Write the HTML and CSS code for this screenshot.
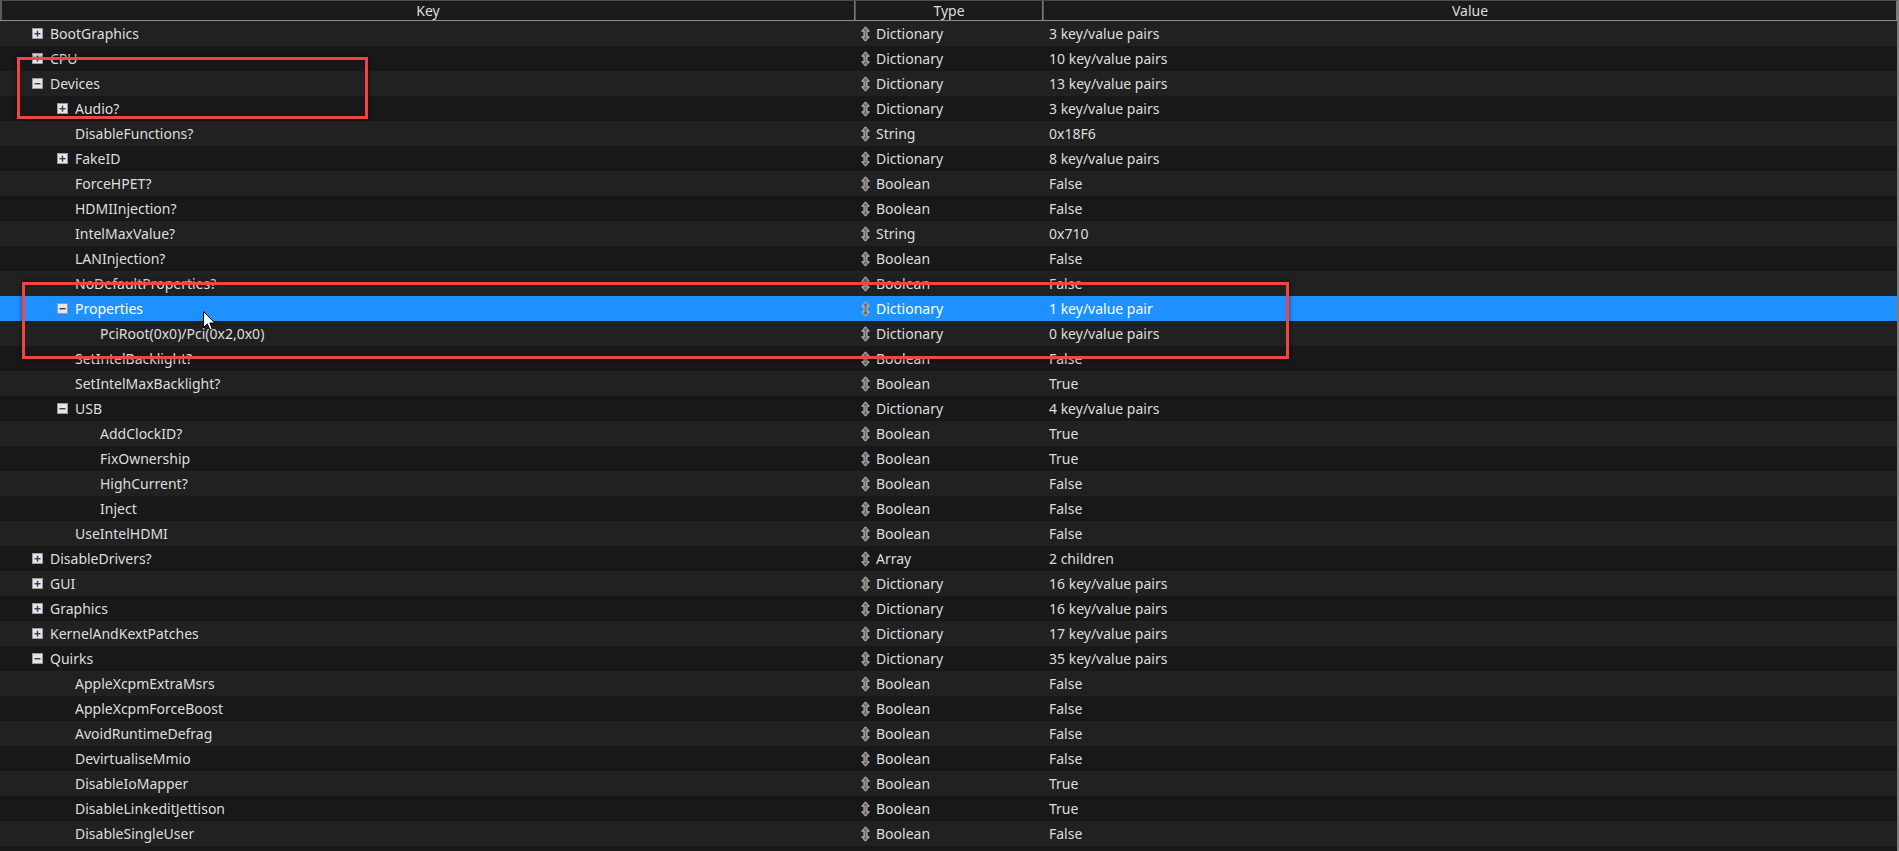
FILE: index.html
```html
<!DOCTYPE html>
<html>
<head>
<meta charset="utf-8">
<link rel="stylesheet" href="styles.css">
<title>Plist editor</title>
</head>
<body>
<div class="tree">
  <div class="header">
    <div class="hcell hkey">Key</div>
    <div class="hcell htype">Type</div>
    <div class="hcell hval">Value</div>
  </div>
  <div class="rows" id="rows"></div>

  <div class="mark mark-a"></div>
  <div class="mark mark-b"></div>
  <svg class="cursor" width="13" height="21" viewBox="0 0 13 21"><path d="M0.5 0.5 L0.5 16.5 L4.3 12.9 L7 19 L9.4 18 L6.8 12 L11.8 12 Z" fill="#fff" stroke="#000" stroke-width="1" stroke-linejoin="round"/></svg>
</div>

<svg width="0" height="0" class="defs">
  <defs>
    <symbol id="plus" viewBox="0 0 11 11">
      <rect x="0.5" y="0.5" width="10" height="10" fill="#e6e6e6" stroke="#9a9a9a"/>
      <rect x="2.5" y="5" width="6" height="1.4" fill="#2f3a66"/>
      <rect x="4.8" y="2.7" width="1.4" height="6" fill="#2f3a66"/>
    </symbol>
    <symbol id="minus" viewBox="0 0 11 11">
      <rect x="0.5" y="0.5" width="10" height="10" fill="#e6e6e6" stroke="#9a9a9a"/>
      <rect x="2.5" y="5" width="6" height="1.4" fill="#2f3a66"/>
    </symbol>
  </defs>
</svg>

<script src="app.js"></script>
</body>
</html>
```

FILE: app.js
```js
var data = [
  ["BootGraphics",0,"plus","Dictionary","3 key/value pairs"],
  ["CPU",0,"plus","Dictionary","10 key/value pairs"],
  ["Devices",0,"minus","Dictionary","13 key/value pairs"],
  ["Audio?",1,"plus","Dictionary","3 key/value pairs"],
  ["DisableFunctions?",1,"","String","0x18F6"],
  ["FakeID",1,"plus","Dictionary","8 key/value pairs"],
  ["ForceHPET?",1,"","Boolean","False"],
  ["HDMIInjection?",1,"","Boolean","False"],
  ["IntelMaxValue?",1,"","String","0x710"],
  ["LANInjection?",1,"","Boolean","False"],
  ["NoDefaultProperties?",1,"","Boolean","False"],
  ["Properties",1,"minus","Dictionary","1 key/value pair","selected"],
  ["PciRoot(0x0)/Pci(0x2,0x0)",2,"","Dictionary","0 key/value pairs"],
  ["SetIntelBacklight?",1,"","Boolean","False"],
  ["SetIntelMaxBacklight?",1,"","Boolean","True"],
  ["USB",1,"minus","Dictionary","4 key/value pairs"],
  ["AddClockID?",2,"","Boolean","True"],
  ["FixOwnership",2,"","Boolean","True"],
  ["HighCurrent?",2,"","Boolean","False"],
  ["Inject",2,"","Boolean","False"],
  ["UseIntelHDMI",1,"","Boolean","False"],
  ["DisableDrivers?",0,"plus","Array","2 children"],
  ["GUI",0,"plus","Dictionary","16 key/value pairs"],
  ["Graphics",0,"plus","Dictionary","16 key/value pairs"],
  ["KernelAndKextPatches",0,"plus","Dictionary","17 key/value pairs"],
  ["Quirks",0,"minus","Dictionary","35 key/value pairs"],
  ["AppleXcpmExtraMsrs",1,"","Boolean","False"],
  ["AppleXcpmForceBoost",1,"","Boolean","False"],
  ["AvoidRuntimeDefrag",1,"","Boolean","False"],
  ["DevirtualiseMmio",1,"","Boolean","False"],
  ["DisableIoMapper",1,"","Boolean","True"],
  ["DisableLinkeditJettison",1,"","Boolean","True"],
  ["DisableSingleUser",1,"","Boolean","False"]
];
var ud = '<svg class="ud" width="9" height="16" viewBox="0 0 9 16">' +
  '<path d="M4.5 0.8 L8.3 5.2 L6 5.2 L6 10.8 L8.3 10.8 L4.5 15.2 L0.7 10.8 L3 10.8 L3 5.2 L0.7 5.2 Z" ' +
  'fill="#6e6e6e" stroke="#c4c4c4" stroke-width="1" stroke-linejoin="round"/></svg>';
var html = "";
data.forEach(function (r) {
  var exp = r[2]
    ? '<svg class="exp" width="11" height="11"><use href="#' + r[2] + '"/></svg>'
    : '<span class="exp"></span>';
  html += '<div class="row' + (r[5] ? ' ' + r[5] : '') + '">' +
    '<div class="cell key lvl' + r[1] + '">' + exp + '<span>' + r[0] + '</span></div>' +
    '<div class="cell type">' + ud + '<span>' + r[3] + '</span></div>' +
    '<div class="cell val">' + r[4] + '</div>' +
    '</div>';
});
document.getElementById("rows").innerHTML = html;
```

FILE: styles.css
```css
html, body {
  margin: 0;
  padding: 0;
  background: #181818;
}
body {
  font-family: "Noto Sans", "Open Sans", sans-serif;
  font-size: 14px;
  color: #dedede;
  overflow: hidden;
}
.defs { position: absolute; }
.tree {
  position: relative;
  width: 1899px;
  height: 851px;
  box-sizing: border-box;
  border-right: 2px solid #7c7c7c;
  background: #181818;
}
.header {
  display: flex;
  height: 21px;
  box-sizing: border-box;
  border-top: 1px solid #4e4e4e;
  border-bottom: 1px solid #8e8e8e;
  background: #1a1a1a;
}
.hcell {
  display: flex;
  align-items: center;
  justify-content: center;
  box-sizing: border-box;
  border-left: 1px solid #555;
  border-right: 1px solid #7a7a7a;
  color: #dedede;
  line-height: 1;
}
.hkey { width: 855px; border-left: 2px solid #5a5a5a; }
.htype { width: 188px; }
.hval { flex: 1; }

.rows { display: flex; flex-direction: column; }
.row {
  display: flex;
  height: 25px;
  align-items: center;
  background: #181818;
}
.row:nth-child(odd) { background: #212121; }
.row.selected { background: #1e90ff; color: #fff; }
.cell {
  display: flex;
  align-items: center;
  box-sizing: border-box;
  white-space: nowrap;
  line-height: 1;
}
.key { width: 855px; }
.lvl0 { padding-left: 32px; }
.lvl1 { padding-left: 57px; }
.lvl2 { padding-left: 82px; }
.exp {
  display: inline-block;
  width: 11px;
  height: 11px;
  margin-right: 7px;
  flex: none;
}
.type { width: 188px; padding-left: 6px; }
.ud { flex: none; margin-right: 6px; }
.val { flex: 1; padding-left: 6px; }

.mark {
  position: absolute;
  box-sizing: border-box;
  border: 3px solid #f04545;
  box-shadow: 0 0 4px rgba(0,0,0,0.6);
  pointer-events: none;
}
.mark-a { left: 17px; top: 57px; width: 351px; height: 62px; }
.mark-b { left: 22px; top: 282px; width: 1267px; height: 77px; }
.cursor { position: absolute; left: 203px; top: 311px; }
```
